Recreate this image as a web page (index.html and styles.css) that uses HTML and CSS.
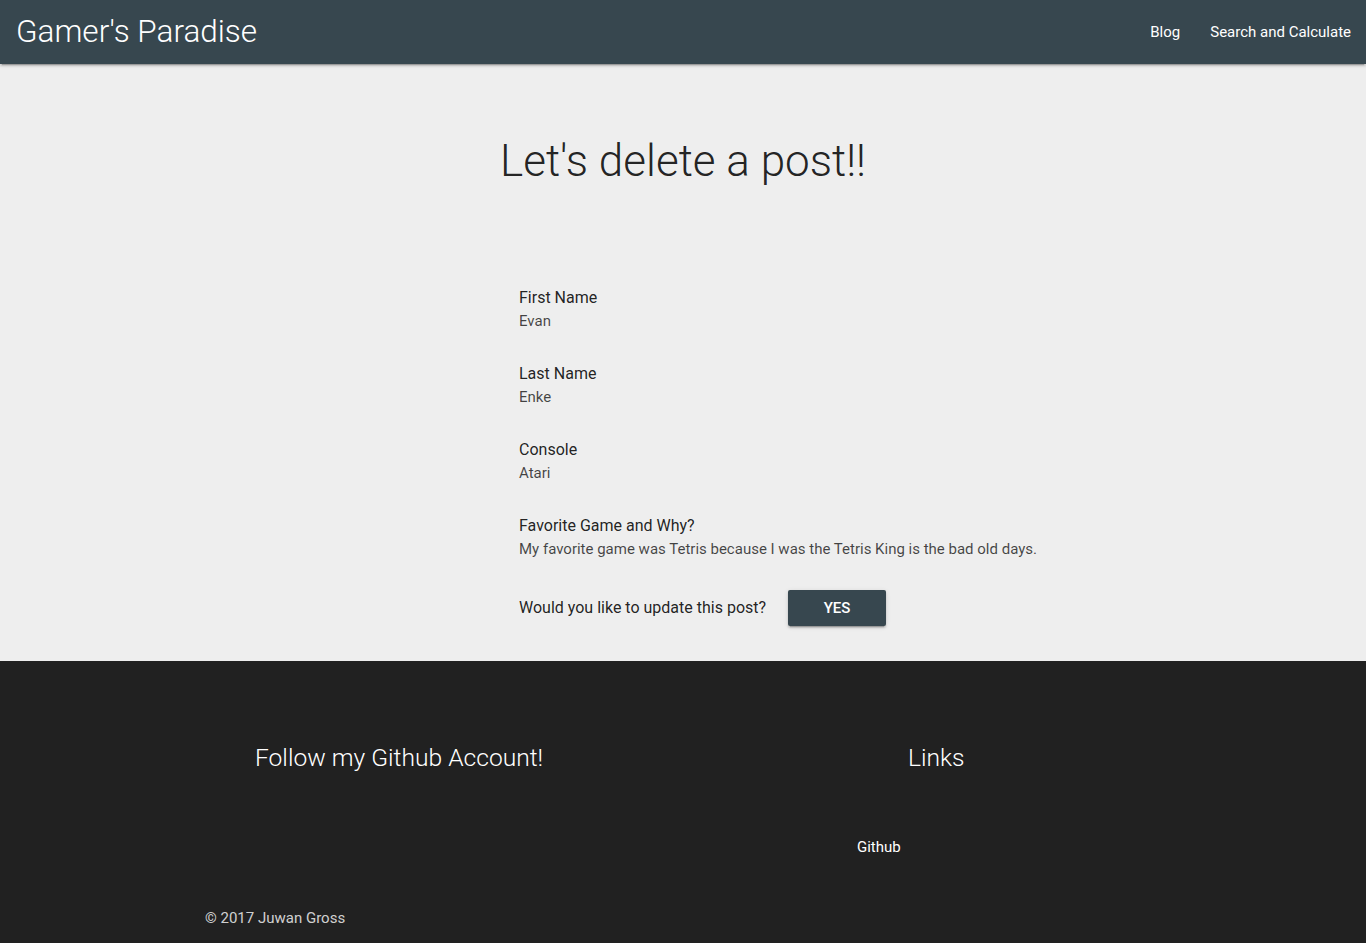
FILE: index.html
```html
<!DOCTYPE html>
<html lang="en">
<head>
<meta charset="utf-8">
<title>Gamer's Paradise</title>
<link rel="stylesheet" href="styles.css">
</head>
<body>
<header class="nav">
  <a class="brand" href="#">Gamer's Paradise</a>
  <ul class="nav-links">
    <li><a href="#">Blog</a></li>
    <li><a href="#">Search and Calculate</a></li>
  </ul>
</header>
<main class="main">
  <h1 class="title">Let's delete a post!!</h1>
  <div class="post">
    <div class="field">
      <div class="label">First Name</div>
      <div class="value">Evan</div>
    </div>
    <div class="field">
      <div class="label">Last Name</div>
      <div class="value">Enke</div>
    </div>
    <div class="field">
      <div class="label">Console</div>
      <div class="value">Atari</div>
    </div>
    <div class="field">
      <div class="label">Favorite Game and Why?</div>
      <div class="value">My favorite game was Tetris because I was the Tetris King is the bad old days.</div>
    </div>
    <div class="confirm">
      <span class="question">Would you like to update this post?</span>
      <button class="btn">Yes</button>
    </div>
  </div>
</main>
<footer class="footer">
  <div class="footer-inner">
    <div class="footer-col left">
      <h5 class="footer-heading">Follow my Github Account!</h5>
    </div>
    <div class="footer-col right">
      <h5 class="footer-heading links-heading">Links</h5>
      <ul class="footer-links">
        <li><a href="#">Github</a></li>
      </ul>
    </div>
  </div>
  <div class="copyright">
    <div class="copyright-inner">© 2017 Juwan Gross</div>
  </div>
</footer>
</body>
</html>
```
FILE: styles.css
```css
html, body {
  margin: 0;
  padding: 0;
}
body {
  font-family: Roboto, "Liberation Sans", sans-serif;
  font-weight: 400;
  color: rgba(0, 0, 0, 0.87);
  background: #eeeeee;
}
a {
  text-decoration: none;
  color: inherit;
}
.nav {
  height: 64px;
  background: #37474f;
  color: #fff;
  display: flex;
  align-items: center;
  justify-content: space-between;
  box-shadow: 0 2px 2px 0 rgba(0,0,0,0.14), 0 1px 5px 0 rgba(0,0,0,0.12), 0 3px 1px -2px rgba(0,0,0,0.2);
  position: relative;
  z-index: 2;
}
.brand {
  font-size: 31.5px;
  font-weight: 300;
  padding-left: 16px;
  line-height: 64px;
}
.nav-links {
  list-style: none;
  margin: 0;
  padding: 0;
  display: flex;
}
.nav-links a {
  display: block;
  padding: 0 15px;
  font-size: 15px;
  font-weight: 400;
  line-height: 64px;
}
.main {
  background: #eeeeee;
  padding: 73px 0 35px;
}
.title {
  margin: 0;
  text-align: center;
  font-size: 44px;
  font-weight: 300;
  line-height: 1.1;
  color: rgba(0,0,0,0.87);
}
.post {
  width: 560px;
  margin: 101px 0 0 519px;
}
.field {
  margin-bottom: 30px;
}
.label {
  font-size: 16px;
  line-height: 24px;
  color: rgba(0,0,0,0.87);
}
.value {
  font-size: 15px;
  line-height: 22px;
  color: rgba(0,0,0,0.72);
}
.confirm {
  display: flex;
  align-items: center;
}
.question {
  font-size: 16px;
  line-height: 24px;
}
.btn {
  margin-left: 22px;
  height: 36px;
  width: 98px;
  border: none;
  border-radius: 2px;
  background: #37474f;
  color: #fff;
  font-family: Roboto, "Liberation Sans", sans-serif;
  font-size: 15px;
  font-weight: 500;
  text-transform: uppercase;
  box-shadow: 0 2px 2px 0 rgba(0,0,0,0.14), 0 1px 5px 0 rgba(0,0,0,0.12), 0 3px 1px -2px rgba(0,0,0,0.2);
  padding: 0;
}
.footer {
  background: #212121;
  color: #fff;
}
.footer-inner {
  width: 956px;
  margin: 0 auto;
  height: 232px;
  display: flex;
}
.footer-col {
  width: 478px;
}
.footer-heading {
  margin: 83px 0 0;
  font-size: 24.6px;
  font-weight: 300;
  line-height: 1.1;
}
.left .footer-heading {
  padding-left: 50px;
}
.links-heading {
  padding-left: 225px;
}
.footer-links {
  list-style: none;
  margin: 66px 0 0;
  padding: 0 0 0 174px;
}
.footer-links a {
  font-size: 15px;
  line-height: 21px;
  font-weight: 400;
}
.copyright {
  height: 50px;
  line-height: 50px;
  color: rgba(255,255,255,0.8);
  font-size: 15px;
}
.copyright-inner {
  width: 956px;
  margin: 0 auto;
}
```
